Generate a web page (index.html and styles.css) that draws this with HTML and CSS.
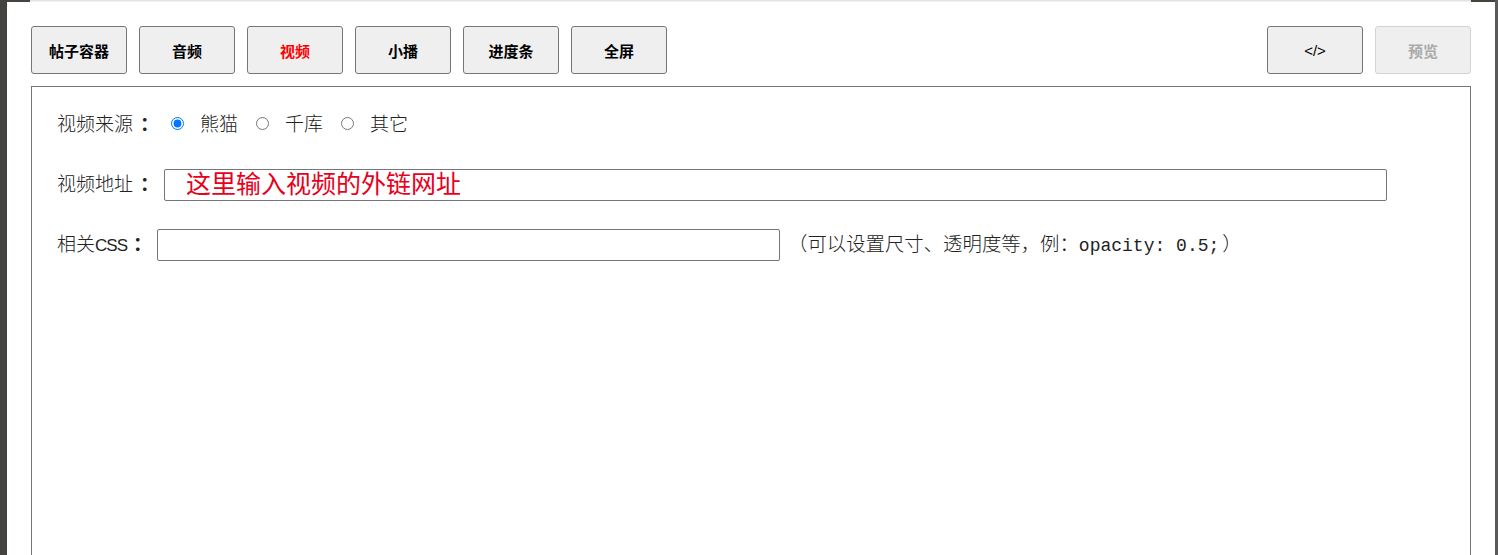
FILE: index.html
```html
<!DOCTYPE html>
<html lang="zh-CN">
<head>
<meta charset="utf-8">
<title>视频</title>
<link rel="stylesheet" href="styles.css">
</head>
<body>
<div class="page">
  <div class="topline"><div class="topline-inner"></div></div>
  <div class="toolbar">
    <div class="tabs">
      <button class="btn">帖子容器</button>
      <button class="btn">音频</button>
      <button class="btn active">视频</button>
      <button class="btn">小播</button>
      <button class="btn">进度条</button>
      <button class="btn">全屏</button>
    </div>
    <div class="actions">
      <button class="btn code">&lt;/&gt;</button>
      <button class="btn" disabled>预览</button>
    </div>
  </div>
  <div class="panel">
    <div class="row">
      <span class="label">视频来源<span class="colon">：</span></span>
      <label class="opt first"><input type="radio" name="src" checked><span class="txt">熊猫</span></label>
      <label class="opt"><input type="radio" name="src"><span class="txt">千库</span></label>
      <label class="opt"><input type="radio" name="src"><span class="txt">其它</span></label>
    </div>
    <div class="row">
      <span class="label">视频地址<span class="colon">：</span></span>
      <div class="field url">
        <input type="text" class="input">
        <span class="note">这里输入视频的外链网址</span>
      </div>
    </div>
    <div class="row">
      <span class="label">相关<span class="latin">CSS</span><span class="colon short">：</span></span>
      <input type="text" class="input css">
      <span class="hint">（可以设置尺寸、透明度等，例：<span class="mono">opacity: 0.5;</span>）</span>
    </div>
  </div>
</div>
</body>
</html>
```

FILE: styles.css
```css
html, body {
  margin: 0;
  padding: 0;
  height: 100%;
}
body {
  background: #45433d;
  overflow: hidden;
  font-family: "Noto Sans CJK SC", "Noto Sans", sans-serif;
}
.page {
  margin-left: 7px;
  border-right: 3px solid #5a5a5a;
  background: #fff;
  height: 100%;
  box-sizing: border-box;
}
.topline {
  height: 2px;
  background: #45433d;
}
.topline-inner {
  height: 2px;
  margin: 0 24px 0 23px;
  background: linear-gradient(#e3e3e3 0 1px, #f1f1f1 1px 2px);
}
.toolbar {
  display: flex;
  justify-content: space-between;
  padding: 24px 24px 0 24px;
}
.tabs, .actions {
  display: flex;
  gap: 12px;
}
.btn {
  width: 96px;
  height: 48px;
  box-sizing: border-box;
  border: 1px solid #767676;
  border-radius: 3px;
  background: #efefef;
  color: #000;
  font-family: "Noto Sans CJK SC", sans-serif;
  font-size: 15px;
  font-weight: 700;
  padding: 0;
}
.btn.active {
  color: #ff0000;
}
.btn.code {
  font-family: "Liberation Sans", Arial, sans-serif;
  font-weight: 400;
  font-size: 15px;
}
.btn:disabled {
  border-color: #d3d3d3;
  color: #a9a9a9;
  background: #efefef;
}
.panel {
  margin: 12px 24px 0 24px;
  border: 1px solid #767676;
  height: 520px;
  padding: 22px 0 0 25px;
  display: flex;
  flex-direction: column;
  gap: 28px;
}
.row {
  display: flex;
  align-items: center;
  height: 32px;
  font-size: 19px;
  color: #222;
  font-weight: 300;
}
.label, .txt, .hint {
  white-space: pre;
  padding-bottom: 5px;
}
.colon {
  margin-left: 7px;
  font-weight: 700;
}
.colon.short {
  margin-left: 6px;
}
.latin {
  font-family: "Liberation Sans", sans-serif;
  font-size: 17px;
  letter-spacing: -1px;
}
.opt {
  display: flex;
  align-items: center;
}
.opt input {
  width: 13px;
  height: 13px;
  margin: 0 16px 3px 18px;
}
.opt.first input {
  margin-left: 12px;
}
.field {
  position: relative;
}
.input {
  box-sizing: border-box;
  border: 1px solid #767676;
  border-radius: 2px;
  margin: 0;
  padding: 1px 2px;
  background: #fff;
}
.url {
  margin-left: 5px;
}
.url .input {
  width: 1223px;
  height: 32px;
  display: block;
}
.note {
  position: absolute;
  left: 22px;
  top: -4px;
  font-size: 25px;
  font-weight: 400;
  color: #e8001c;
  line-height: 34px;
  white-space: nowrap;
}
.css {
  margin-left: 5px;
  width: 623px;
  height: 32px;
}
.hint {
  margin-left: 8px;
  font-size: 19.4px;
}
.mono {
  font-family: "Liberation Mono", monospace;
  font-size: 18px;
  color: #222;
  margin-right: 3px;
}
```
